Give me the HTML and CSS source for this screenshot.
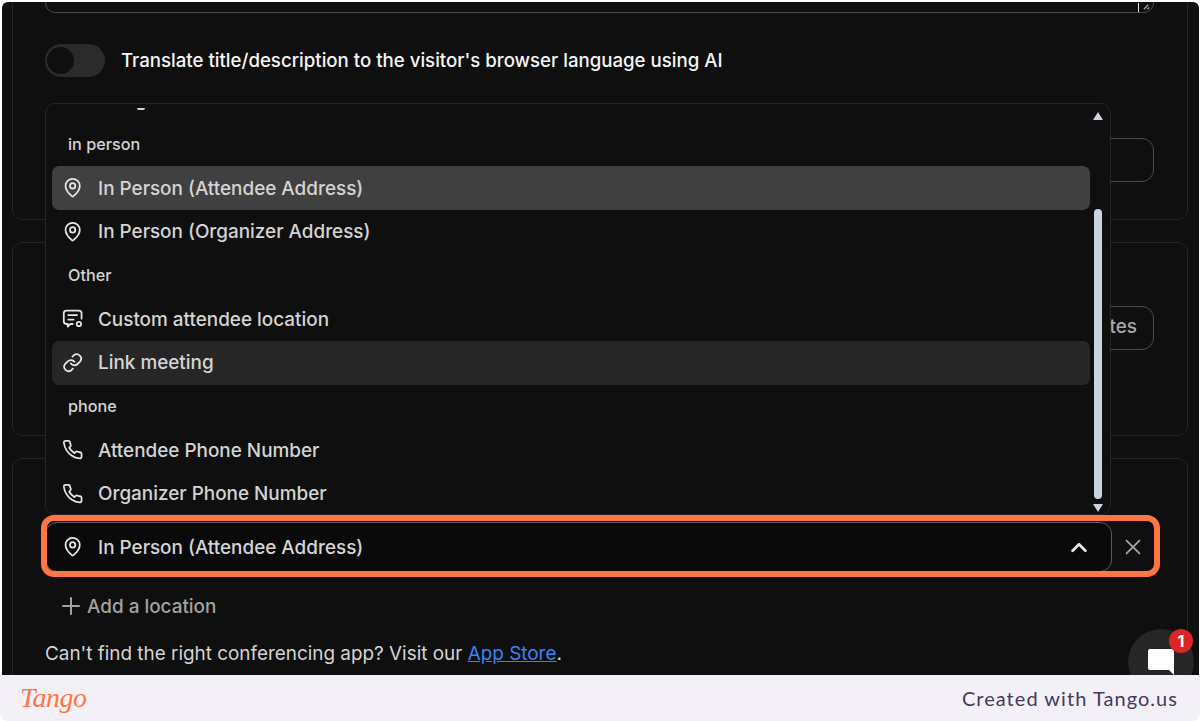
FILE: index.html
```html
<!DOCTYPE html>
<html lang="en">
<head>
    <meta charset="UTF-8">
    <title>Location settings</title>
    <link rel="stylesheet" href="styles.css">
</head>
<body>
    <div class="frame">
        <div class="shot">
            <div class="card card-top">
                <div class="textarea-edge">
                    <span class="caret-line"></span>
                    <svg class="resize" viewBox="0 0 10 10"><path d="M2 8l5-5M6 8l2-2"/></svg>
                </div>
                <div class="translate-row">
                    <span class="toggle"><span class="knob"></span></span>
                    <span class="translate-label">Translate title/description to the visitor's browser language using AI</span>
                </div>
                <div class="ghost-input"></div>
            </div>

            <div class="card card-mid">
                <div class="ghost-button">Templates</div>
            </div>

            <div class="card card-low"></div>

            <div class="menu">
                <div class="cut-stub"></div>
                <div class="group-label">in person</div>
                <div class="option active">
                    <svg class="icon" viewBox="0 0 24 24"><path d="M20 10c0 5-5.5 10.2-7.4 11.8a1 1 0 0 1-1.2 0C9.5 20.2 4 15 4 10a8 8 0 0 1 16 0"/><circle cx="12" cy="10" r="3"/></svg>
                    <span>In Person (Attendee Address)</span>
                </div>
                <div class="option">
                    <svg class="icon" viewBox="0 0 24 24"><path d="M20 10c0 5-5.5 10.2-7.4 11.8a1 1 0 0 1-1.2 0C9.5 20.2 4 15 4 10a8 8 0 0 1 16 0"/><circle cx="12" cy="10" r="3"/></svg>
                    <span>In Person (Organizer Address)</span>
                </div>
                <div class="group-label">Other</div>
                <div class="option">
                    <svg class="icon" viewBox="0 0 24 24"><path d="M12 18H9.500l-3 3v-3H5a3 3 0 0 1-3-3V6a3 3 0 0 1 3-3h14a3 3 0 0 1 3 3v6"/><path d="M7 8h10M7 13h6"/><circle cx="19" cy="18" r="2.500"/></svg>
                    <span>Custom attendee location</span>
                </div>
                <div class="option hovered">
                    <svg class="icon" viewBox="0 0 24 24"><path d="M10 13a5 5 0 0 0 7.500.5l3-3a5 5 0 0 0-7-7l-1.700 1.700"/><path d="M14 11a5 5 0 0 0-7.500-.5l-3 3a5 5 0 0 0 7 7l1.700-1.700"/></svg>
                    <span>Link meeting</span>
                </div>
                <div class="group-label">phone</div>
                <div class="option">
                    <svg class="icon" viewBox="0 0 24 24"><path d="M22 16.900v3a2 2 0 0 1-2.200 2 19.800 19.800 0 0 1-8.600-3.100 19.500 19.500 0 0 1-6-6A19.800 19.800 0 0 1 2.100 4.200 2 2 0 0 1 4.100 2h3a2 2 0 0 1 2 1.700c.1 1 .4 1.900.7 2.800a2 2 0 0 1-.5 2.100L8.100 9.900a16 16 0 0 0 6 6l1.300-1.300a2 2 0 0 1 2.100-.4c.9.3 1.800.6 2.800.7a2 2 0 0 1 1.700 2"/></svg>
                    <span>Attendee Phone Number</span>
                </div>
                <div class="option">
                    <svg class="icon" viewBox="0 0 24 24"><path d="M22 16.900v3a2 2 0 0 1-2.200 2 19.800 19.800 0 0 1-8.600-3.100 19.500 19.500 0 0 1-6-6A19.800 19.800 0 0 1 2.100 4.200 2 2 0 0 1 4.100 2h3a2 2 0 0 1 2 1.700c.1 1 .4 1.900.7 2.800a2 2 0 0 1-.5 2.100L8.100 9.900a16 16 0 0 0 6 6l1.300-1.300a2 2 0 0 1 2.100-.4c.9.3 1.800.6 2.800.7a2 2 0 0 1 1.700 2"/></svg>
                    <span>Organizer Phone Number</span>
                </div>
                <div class="scroll-up"></div>
                <div class="scroll-thumb"></div>
                <div class="scroll-down"></div>
            </div>

            <div class="select-row">
                <div class="select">
                    <svg class="icon" viewBox="0 0 24 24"><path d="M20 10c0 5-5.5 10.2-7.4 11.8a1 1 0 0 1-1.2 0C9.500 20.2 4 15 4 10a8 8 0 0 1 16 0"/><circle cx="12" cy="10" r="3"/></svg>
                    <span class="select-text">In Person (Attendee Address)</span>
                    <svg class="chevron" viewBox="0 0 24 24"><path d="M5 16l7-7 7 7"/></svg>
                </div>
                <svg class="clear" viewBox="0 0 24 24"><path d="M5 5l14 14M19 5L5 19"/></svg>
            </div>

            <div class="add-location">
                <svg class="plus" viewBox="0 0 24 24"><path d="M12 4v16M4 12h16"/></svg>
                <span>Add a location</span>
            </div>
            <p class="help">Can't find the right conferencing app? Visit our <a href="#">App Store</a>.</p>

            <div class="highlight"></div>

            <div class="chat">
                <svg class="chat-icon" viewBox="0 0 28 28"><path d="M3 1h22a2 2 0 0 1 2 2v24l-5-5H3a2 2 0 0 1-2-2V3a2 2 0 0 1 2-2z"/></svg>
            </div>
            <div class="chat-badge">1</div>
        </div>

        <div class="footer">
            <span class="logo">Tango</span>
            <span class="created">Created with Tango.us</span>
        </div>
    </div>
</body>
</html>
```
FILE: styles.css
```css
* {
    box-sizing: border-box;
}
body {
    margin: 0;
    width: 1200px;
    height: 721px;
    overflow: hidden;
    background: #fff;
    font-family: Inter, "Liberation Sans", sans-serif;
}
.frame {
    height: 721px;
    padding: 2px 1px 0 2px;
    display: flex;
    flex-direction: column;
}
.shot {
    position: relative;
    height: 673px;
    background: #0f0f0f;
    border-radius: 6px 6px 0 0;
    overflow: hidden;
}
.card {
    position: absolute;
    left: 10px;
    width: 1176px;
    border: 1px solid #242424;
    border-radius: 10px;
}
.card-top {
    top: -20px;
    height: 238px;
}
.card-mid {
    top: 240px;
    height: 194px;
}
.card-low {
    top: 456px;
    height: 260px;
}
.textarea-edge {
    position: absolute;
    left: 32px;
    top: 8px;
    width: 1109px;
    height: 22px;
    border: 1px solid #4a4a4a;
    border-radius: 10px;
}
.caret-line {
    position: absolute;
    right: 14px;
    bottom: 0;
    width: 1px;
    height: 9px;
    background: #e5e5e5;
}
.resize {
    position: absolute;
    right: 2px;
    bottom: 1px;
    width: 9px;
    height: 9px;
    fill: none;
    stroke: #a3a3a3;
    stroke-width: 1.5;
}
.translate-row {
    position: absolute;
    left: 32px;
    top: 61px;
    display: flex;
    align-items: center;
    gap: 16px;
}
.toggle {
    width: 60px;
    height: 33px;
    padding: 3px 2px;
    border-radius: 17px;
    background: #2b2b2b;
}
.knob {
    display: block;
    width: 27px;
    height: 27px;
    border-radius: 50%;
    background: #0f0f0f;
}
.translate-label {
    margin-top: -2px;
    color: #f5f5f5;
    font-size: 18.65px;
    font-weight: 500;
}
.ghost-input {
    position: absolute;
    left: 998px;
    top: 155px;
    width: 143px;
    height: 44px;
    border: 1px solid #4a4a4a;
    border-radius: 12px;
}
.ghost-button {
    position: absolute;
    right: 33px;
    top: 63px;
    width: 140px;
    height: 44px;
    padding-right: 16px;
    border: 1px solid #4a4a4a;
    border-radius: 12px;
    color: #a8a8a8;
    font-size: 18.9px;
    font-weight: 500;
    line-height: 40px;
    text-align: right;
}
.menu {
    position: absolute;
    left: 43px;
    top: 101px;
    width: 1066px;
    height: 412px;
    padding: 18.6px 20px 0 6px;
    background: #0f0f0f;
    border: 1px solid #242424;
    border-radius: 10px;
    overflow: hidden;
}
.cut-stub {
    position: absolute;
    left: 91px;
    top: 4px;
    width: 8px;
    height: 2px;
    border-radius: 0 0 4px 4px;
    background: #d4d4d4;
}
.group-label {
    display: flex;
    align-items: center;
    height: 43.67px;
    padding-left: 16px;
    color: #d4d4d4;
    font-size: 16.2px;
    font-weight: 500;
}
.option {
    display: flex;
    align-items: center;
    gap: 14.67px;
    height: 43.67px;
    padding-left: 10px;
    border-radius: 7px;
    color: #d4d4d4;
    font-size: 18.9px;
    font-weight: 500;
}
.option.active {
    background: #404040;
}
.option.hovered {
    background: #262626;
}
.icon {
    flex: none;
    width: 21.33px;
    height: 21.33px;
    fill: none;
    stroke: #e5e5e5;
    stroke-width: 2;
    stroke-linecap: round;
    stroke-linejoin: round;
}
.scroll-up {
    position: absolute;
    right: 7px;
    top: 8px;
    border-left: 5.5px solid transparent;
    border-right: 5.5px solid transparent;
    border-bottom: 8px solid #cbd5e1;
}
.scroll-thumb {
    position: absolute;
    right: 8px;
    top: 105px;
    width: 8px;
    height: 290px;
    border-radius: 4px;
    background: #cbd5e1;
}
.scroll-down {
    position: absolute;
    right: 7px;
    top: 400px;
    border-left: 5.5px solid transparent;
    border-right: 5.5px solid transparent;
    border-top: 8px solid #cbd5e1;
}
.select-row {
    position: absolute;
    left: 43px;
    top: 520px;
    display: flex;
    align-items: center;
}
.select {
    display: flex;
    align-items: center;
    gap: 14.67px;
    width: 1067px;
    height: 50px;
    padding: 0 21px 0 16px;
    background: #0a0a0a;
    border: 1px solid #5a5a5a;
    border-radius: 12px;
    color: #d4d4d4;
    font-size: 18.9px;
    font-weight: 500;
}
.select-text {
    flex: 1;
}
.chevron {
    width: 22px;
    height: 22px;
    fill: none;
    stroke: #e5e5e5;
    stroke-width: 3;
    stroke-linecap: round;
    stroke-linejoin: round;
}
.clear {
    width: 22px;
    height: 22px;
    margin-left: 10px;
    fill: none;
    stroke: #a3a3a3;
    stroke-width: 2;
    stroke-linecap: round;
}
.highlight {
    position: absolute;
    left: 39px;
    top: 513px;
    width: 1119px;
    height: 62px;
    border: 6px solid #ff7544;
    border-radius: 13px;
}
.add-location {
    position: absolute;
    left: 57px;
    top: 592px;
    display: flex;
    align-items: center;
    gap: 4px;
    color: #a3a3a3;
    font-size: 18.9px;
    font-weight: 500;
}
.plus {
    width: 24px;
    height: 24px;
    fill: none;
    stroke: #a3a3a3;
    stroke-width: 2;
    stroke-linecap: round;
}
.help {
    position: absolute;
    left: 43px;
    top: 640px;
    margin: 0;
    color: #d4d4d4;
    font-size: 18.9px;
    font-weight: 400;
}
.help a {
    color: #3b82f6;
    text-decoration: underline;
}
.chat {
    position: absolute;
    left: 1126px;
    top: 627px;
    width: 66px;
    height: 66px;
    padding: 19px 0 0 18.5px;
    border-radius: 50%;
    background: #262626;
}
.chat-icon {
    display: block;
    width: 28px;
    height: 28px;
    fill: #fff;
}
.chat-badge {
    position: absolute;
    left: 1167px;
    top: 627px;
    width: 24px;
    height: 24px;
    border-radius: 50%;
    background: #dc2626;
    color: #fff;
    font-size: 16px;
    font-weight: 700;
    line-height: 24px;
    text-align: center;
}
.footer {
    flex: 1;
    margin: 0 -1px 0 -2px;
    display: flex;
    align-items: center;
    justify-content: space-between;
    padding: 0 22px 0 20px;
    background: #f3f1f7;
    border-radius: 0 0 8px 8px;
}
.logo {
    color: #ff7544;
    font-family: "Liberation Serif", serif;
    font-size: 28px;
    font-style: italic;
    font-weight: 400;
    letter-spacing: -0.5px;
}
.created {
    color: #433a5c;
    font-family: Lato, sans-serif;
    font-size: 20px;
    letter-spacing: 1.04px;
}
```
